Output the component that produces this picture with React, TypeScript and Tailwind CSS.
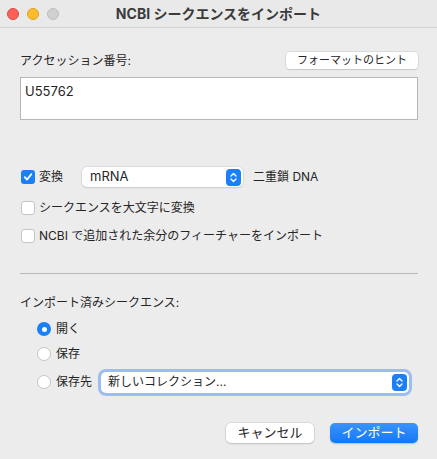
const font = { fontFamily: 'Inter, "Noto Sans CJK JP", sans-serif' };

function Checkbox({ checked }: { checked?: boolean }) {
  if (checked) {
    return (
      <span className="ml-px w-[14px] h-[14px] rounded-[3px] bg-[#1b7ff7] flex items-center justify-center shrink-0">
        <svg width="10" height="10" viewBox="0 0 10 10">
          <path d="M1.8 5.2 L4 7.6 L8.3 2.3" fill="none" stroke="white" strokeWidth="1.8" strokeLinecap="round" strokeLinejoin="round" />
        </svg>
      </span>
    );
  }
  return <span className="ml-px w-[14px] h-[14px] rounded-[3px] bg-white border border-[#c4c4c4] shrink-0" />;
}

function Radio({ checked }: { checked?: boolean }) {
  if (checked) {
    return (
      <span className="w-[14px] h-[14px] rounded-full bg-[#1b7ff7] flex items-center justify-center shrink-0">
        <span className="w-[5px] h-[5px] rounded-full bg-white" />
      </span>
    );
  }
  return <span className="w-[14px] h-[14px] rounded-full bg-white border border-[#c4c4c4] shrink-0" />;
}

function Stepper() {
  return (
    <span className="w-[15px] h-[17px] rounded-[4px] bg-[#1b7ff7] flex items-center justify-center shrink-0">
      <svg width="9" height="13" viewBox="0 0 9 13">
        <path d="M2 5 L4.5 2.5 L7 5 M2 8 L4.5 10.5 L7 8" fill="none" stroke="white" strokeWidth="1.4" strokeLinecap="round" strokeLinejoin="round" />
      </svg>
    </span>
  );
}

export default function App() {
  return (
    <div style={font} className="w-[437px] h-[459px] bg-[#ececec] text-[12px] text-[#252525] flex flex-col overflow-hidden">
      <div className="h-[28px] shrink-0 border-b border-[#d3d3d3] bg-[#e9e9e9] flex items-center relative">
        <div className="flex gap-[8px] pl-[7px]">
          <span className="w-[12px] h-[12px] rounded-full bg-[#fe5f57] border border-[#e2463f]" />
          <span className="w-[12px] h-[12px] rounded-full bg-[#febc2e] border border-[#e1a116]" />
          <span className="w-[12px] h-[12px] rounded-full bg-[#d0d0d0] border border-[#bdbdbd]" />
        </div>
        <div className="absolute inset-0 flex items-center justify-center font-bold text-[14px] text-[#3b3b3b]">
          NCBI シークエンスをインポート
        </div>
      </div>

      <div className="pl-5 pr-[19px] flex flex-col">
        <div className="mt-[24px] flex items-center justify-between h-[17px]">
          <span>アクセッション番号:</span>
          <button className="w-[132px] h-[17px] bg-white rounded-[4px] shadow-[0_0_0_0.5px_#c8c8c8,0_1px_1px_rgba(0,0,0,0.15)] text-[11px] flex items-center justify-center">
            フォーマットのヒント
          </button>
        </div>

        <div className="mt-[8px] h-[43px] bg-white border border-[#b7b7b7] px-[4px] pt-[4px] text-[13px]">
          U55762
        </div>

        <div className="mt-[47px] h-[20px] flex items-center">
          <Checkbox checked />
          <span className="ml-[4px] w-[43px]">変換</span>
          <div className="w-[161px] h-[20px] bg-white rounded-[5px] shadow-[0_0_0_0.5px_#cfcfcf,0_1px_1.5px_rgba(0,0,0,0.15)] flex items-center justify-between pl-[8px] pr-[2px]">
            <span className="text-[13px]">mRNA</span>
            <Stepper />
          </div>
          <span className="ml-[10px]">二重鎖 DNA</span>
        </div>

        <div className="mt-[13px] h-[16px] flex items-center">
          <Checkbox />
          <span className="ml-[4px]">シークエンスを大文字に変換</span>
        </div>

        <div className="mt-[12px] h-[16px] flex items-center">
          <Checkbox />
          <span className="ml-[4px]">NCBI で追加された余分のフィーチャーをインポート</span>
        </div>

        <div className="mt-[29px] h-px bg-[#b9b9b9]" />

        <div className="mt-[21px] h-[16px] flex items-center">インポート済みシークエンス:</div>

        <div className="pl-[17px] flex flex-col">
          <div className="mt-[10px] h-[16px] flex items-center">
            <Radio checked />
            <span className="ml-[5px]">開く</span>
          </div>
          <div className="mt-[9px] h-[16px] flex items-center">
            <Radio />
            <span className="ml-[5px]">保存</span>
          </div>
          <div className="mt-[8px] h-[24px] flex items-center">
            <Radio />
            <span className="ml-[5px] w-[45px]">保存先</span>
            <div className="w-[308px] h-[21px] bg-white rounded-[5px] shadow-[0_0_0_3px_#9dbdf2] flex items-center justify-between pl-[7px] pr-[2px]">
              <span>新しいコレクション...</span>
              <Stepper />
            </div>
          </div>
        </div>

        <div className="mt-[29px] flex justify-end gap-[16px]">
          <button className="w-[88px] h-[20px] bg-white rounded-[5px] shadow-[0_0_0_0.5px_#c8c8c8,0_1px_1.5px_rgba(0,0,0,0.2)] text-[13px] flex items-center justify-center">
            キャンセル
          </button>
          <button className="w-[88px] h-[20px] rounded-[5px] bg-gradient-to-b from-[#3a93fc] to-[#1178f7] text-white text-[13px] shadow-[0_1px_1.5px_rgba(0,0,0,0.2)] flex items-center justify-center">
            インポート
          </button>
        </div>
      </div>
    </div>
  );
}
